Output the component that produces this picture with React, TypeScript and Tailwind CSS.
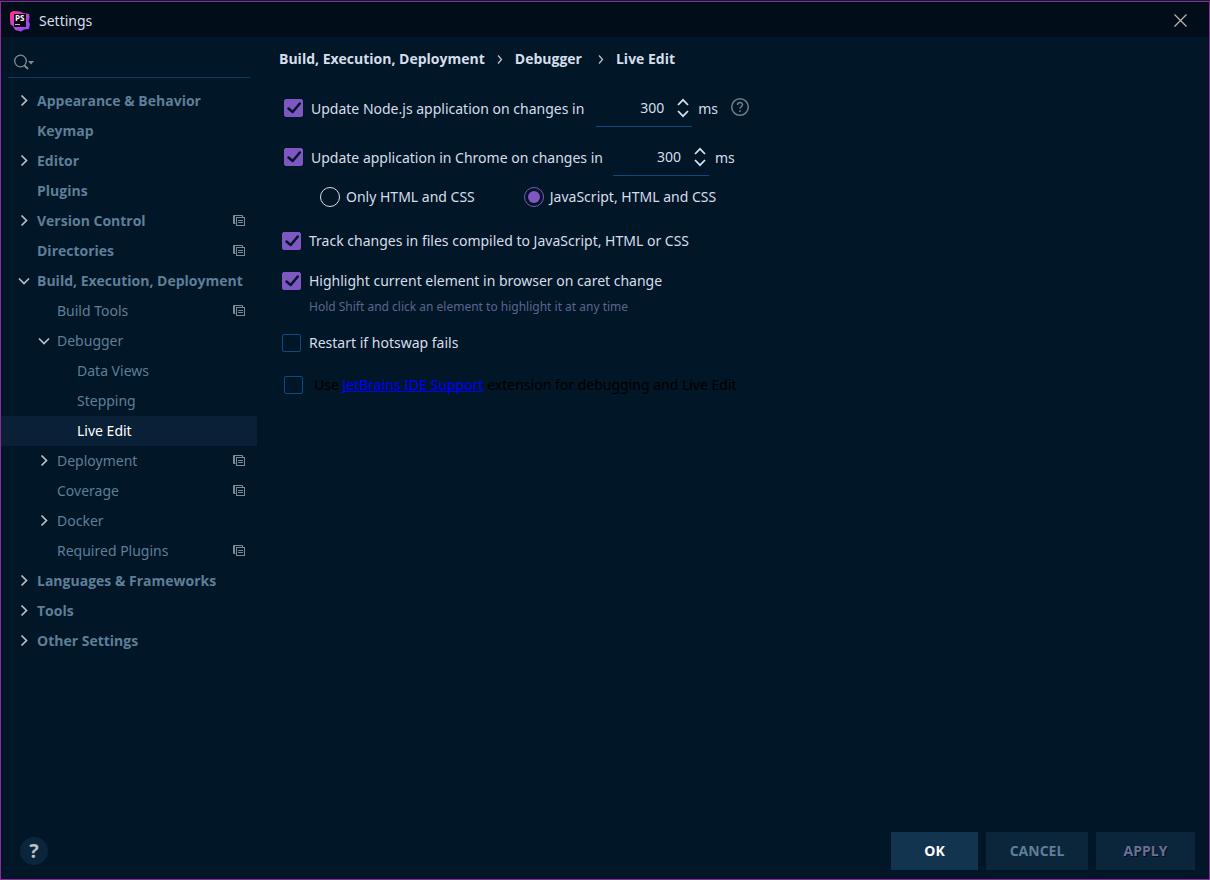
import { useState } from 'react';

type TreeItem = {
  label: string;
  level: number;
  state?: 'open' | 'closed';
  perProject?: boolean;
};

const items: TreeItem[] = [
  { label: 'Appearance & Behavior', level: 0, state: 'closed' },
  { label: 'Keymap', level: 0 },
  { label: 'Editor', level: 0, state: 'closed' },
  { label: 'Plugins', level: 0 },
  { label: 'Version Control', level: 0, state: 'closed', perProject: true },
  { label: 'Directories', level: 0, perProject: true },
  { label: 'Build, Execution, Deployment', level: 0, state: 'open' },
  { label: 'Build Tools', level: 1, perProject: true },
  { label: 'Debugger', level: 1, state: 'open' },
  { label: 'Data Views', level: 2 },
  { label: 'Stepping', level: 2 },
  { label: 'Live Edit', level: 2 },
  { label: 'Deployment', level: 1, state: 'closed', perProject: true },
  { label: 'Coverage', level: 1, perProject: true },
  { label: 'Docker', level: 1, state: 'closed' },
  { label: 'Required Plugins', level: 1, perProject: true },
  { label: 'Languages & Frameworks', level: 0, state: 'closed' },
  { label: 'Tools', level: 0, state: 'closed' },
  { label: 'Other Settings', level: 0, state: 'closed' },
];

const indents = ['pl-[15px]', 'pl-[35px]', 'pl-[55px]'];

const Logo = () => (
  <svg width="22" height="22" viewBox="0 0 22 22" aria-hidden="true">
    <defs>
      <linearGradient id="logo" x1="0" y1="0" x2="1" y2="1">
        <stop offset="0.1" stopColor="#ff318c" />
        <stop offset="0.45" stopColor="#c543d8" />
        <stop offset="1" stopColor="#7b4dff" />
      </linearGradient>
    </defs>
    <path d="M1 3 4 1l7 .5 3 1.500 6 1 .5 3-1 4 1.500 3-1 5-5 .5-3 2-6-1.500-2-4-2.500-1.500-.5-5Z" fill="url(#logo)" />
    <rect x="5" y="4" width="12" height="13" fill="#0b0610" />
    <rect x="6" y="14" width="5" height="1" fill="#b9b5bd" />
    <text x="6" y="11" fontSize="8" fontWeight="700" fill="#fff" fontFamily="Open Sans, sans-serif">PS</text>
  </svg>
);

const Arrow = ({ open }: { open: boolean }) => (
  <svg width="16" height="16" viewBox="0 0 16 16" fill="none" stroke="#b9c1c7" strokeWidth="1.7" aria-hidden="true">
    <path d={open ? 'M3 5.5 8 10.5 13 5.5' : 'M5.5 2.5 10.5 7.5 5.5 12.5'} />
  </svg>
);

const ProjectIcon = () => (
  <svg width="12" height="12" viewBox="0 0 12 12" fill="none" stroke="#7c8b96" aria-hidden="true">
    <path d="M9.500 2V.5H.5V8.500h2M1.500 1v7" />
    <rect x="3.500" y="2.500" width="8" height="8" />
    <path d="M5 5.500h5M5 7.500h5" />
  </svg>
);

const Checkbox = ({ id, checked }: { id: string; checked?: boolean }) => (
  <span className="relative flex h-[18px] w-[19px] shrink-0">
    <input
      id={id}
      type="checkbox"
      defaultChecked={checked}
      className="peer h-full w-full appearance-none rounded-xs border border-[#0b4a80] checked:border-[#7e57c2] checked:bg-[#7e57c2]"
    />
    <svg
      className="pointer-events-none absolute inset-0 hidden peer-checked:block"
      width="19"
      height="18"
      viewBox="0 0 19 18"
      fill="none"
      stroke="#011627"
      strokeWidth="2.5"
      strokeLinecap="round"
      strokeLinejoin="round"
      aria-hidden="true"
    >
      <path d="M4.500 9.500 8.700 13 15.800 4.500" />
    </svg>
  </span>
);

const Spinner = ({ label }: { label: string }) => {
  const [value, setValue] = useState(300);

  return (
    <div className="flex h-[37px] w-24 items-center border-b border-[#0b4a80]">
      <input
        type="text"
        aria-label={label}
        value={value}
        onChange={(e) => setValue(Number(e.target.value) || 0)}
        className="w-[68px] bg-transparent text-right outline-none"
      />
      <div className="ml-auto mr-[3px] flex flex-col gap-1">
        <button type="button" aria-label="Increase" onClick={() => setValue(value + 50)}>
          <svg width="12" height="8" viewBox="0 0 12 8" fill="none" stroke="#d6deeb" strokeWidth="1.8">
            <path d="M1 7 6 1.800 11 7" />
          </svg>
        </button>
        <button type="button" aria-label="Decrease" onClick={() => setValue(value - 50)}>
          <svg width="12" height="8" viewBox="0 0 12 8" fill="none" stroke="#d6deeb" strokeWidth="1.8">
            <path d="M1 1 6 6.200 11 1" />
          </svg>
        </button>
      </div>
    </div>
  );
};

const Radio = ({ id, checked }: { id: string; checked?: boolean }) => (
  <span className="relative flex h-5 w-5 shrink-0 items-center justify-center">
    <input
      id={id}
      type="radio"
      name="chrome-mode"
      defaultChecked={checked}
      className="peer h-5 w-5 appearance-none rounded-full border border-[#d6deeb] checked:border-[#7e57c2]"
    />
    <span className="pointer-events-none absolute hidden h-3 w-3 rounded-full bg-[#7e57c2] peer-checked:block" />
  </span>
);

const Sidebar = () => {
  const [selected, setSelected] = useState('Live Edit');

  return (
    <aside className="w-64 shrink-0">
      <label className="mx-[7px] flex h-[41px] items-center border-b border-[#0b3b66] pl-[5px] pt-2.5">
        <svg width="22" height="17" viewBox="0 0 22 17" fill="none" stroke="#7d8b95" strokeWidth="1.3" aria-hidden="true">
          <circle cx="7.500" cy="7" r="5.800" />
          <path d="M11.500 11.500 15 15" strokeWidth="2" />
          <path d="M15 7h6l-3 3.500Z" fill="#7d8b95" stroke="none" />
        </svg>
        <input aria-label="Search settings" className="min-w-0 flex-1 bg-transparent outline-none" />
      </label>
      <nav className="mt-2">
        {items.map((item) => (
          <button
            key={item.label}
            type="button"
            onClick={() => setSelected(item.label)}
            className={`flex h-[30px] w-full items-center pr-3 text-left ${indents[item.level]} ${
              item.level === 0 ? "font-['Open_Sans',sans-serif] font-bold" : ''
            } ${selected === item.label ? 'bg-[#0a2036] text-white' : 'text-[#5f7e97]'}`}
          >
            <span className="mr-[5px] w-4 shrink-0">{item.state && <Arrow open={item.state === 'open'} />}</span>
            <span className="whitespace-nowrap">{item.label}</span>
            {item.perProject && (
              <span className="ml-auto">
                <ProjectIcon />
              </span>
            )}
          </button>
        ))}
      </nav>
    </aside>
  );
};

const Crumb = () => (
  <svg width="6" height="9" viewBox="0 0 6 9" fill="none" stroke="#b9c1c7" strokeWidth="1.3" aria-hidden="true">
    <path d="M1 .5 4.500 4.500 1 8.500" />
  </svg>
);

const App = () => {
  return (
    <div className="min-h-screen bg-[#0b1f2e] pt-px font-['Noto_Sans',sans-serif] text-sm leading-5 text-[#d6deeb]">
      <div className="flex min-h-[calc(100vh-1px)] flex-col border border-[#8e2a9b] bg-[#011627]">
        <header className="flex h-[35px] items-center bg-[#010e1a] pl-2 pr-[22px] pt-0.5">
          <Logo />
          <h1 className="ml-2">Settings</h1>
          <button type="button" aria-label="Close" className="ml-auto">
            <svg width="13" height="13" viewBox="0 0 13 13" stroke="#b4b4ac" strokeWidth="1.3">
              <path d="M.5.5l12 12M12.500.5l-12 12" />
            </svg>
          </button>
        </header>

        <div className="flex flex-1">
          <Sidebar />
          <main className="min-w-0 flex-1 pl-[22px] pt-3">
            <div className="flex items-center font-['Open_Sans',sans-serif] font-bold">
              <span>Build, Execution, Deployment</span>
              <span className="mx-3"><Crumb /></span>
              <span>Debugger</span>
              <span className="ml-4 mr-3"><Crumb /></span>
              <span>Live Edit</span>
            </div>

            <div className="mt-[21px] flex items-center pl-[5px]">
              <span className="pb-0.5"><Checkbox id="node" checked /></span>
              <label htmlFor="node" className="ml-2 mr-3">Update Node.js application on changes in</label>
              <Spinner label="Node.js delay" />
              <span className="ml-1.5">ms</span>
              <button type="button" aria-label="Help on Node.js updates" className="ml-3 pb-[3px]">
                <svg width="20" height="20" viewBox="0 0 20 20" fill="none" stroke="#6f7d87" strokeWidth="1.5">
                  <circle cx="10" cy="10" r="8.300" />
                  <path d="M7.500 8c0-3.300 5-3.200 5-.2 0 1.700-2.500 1.900-2.500 4M10 13.300v1.700" />
                </svg>
              </button>
            </div>

            <div className="mt-3 flex items-center pl-[5px]">
              <span className="pb-0.5"><Checkbox id="chrome" checked /></span>
              <label htmlFor="chrome" className="ml-2 mr-2.5">Update application in Chrome on changes in</label>
              <Spinner label="Chrome delay" />
              <span className="ml-1.5">ms</span>
            </div>

            <div className="mt-[11px] flex items-center pl-[41px]">
              <Radio id="css" />
              <label htmlFor="css" className="ml-1.5">Only HTML and CSS</label>
              <span className="w-[49px]" />
              <Radio id="all" checked />
              <label htmlFor="all" className="ml-1.5">JavaScript, HTML and CSS</label>
            </div>

            <div className="mt-6 flex items-center pl-[3px]">
              <Checkbox id="track" checked />
              <label htmlFor="track" className="ml-2">Track changes in files compiled to JavaScript, HTML or CSS</label>
            </div>
            <div className="mt-5 flex items-center pl-[3px]">
              <Checkbox id="highlight" checked />
              <label htmlFor="highlight" className="ml-2">Highlight current element in browser on caret change</label>
            </div>
            <p className="mt-1.5 pl-[30px] text-xs leading-5 text-[#5c6590]">
              Hold Shift and click an element to highlight it at any time
            </p>
            <div className="mt-4 flex items-center pl-[3px]">
              <Checkbox id="restart" />
              <label htmlFor="restart" className="ml-2">Restart if hotswap fails</label>
            </div>
            <div className="mt-[22px] flex items-center pl-[5px] text-black">
              <Checkbox id="extension" />
              <label htmlFor="extension" className="ml-[11px]">
                Use <a href="#" className="text-[#0000ff] underline [text-decoration-skip-ink:none]">JetBrains IDE Support</a> extension for debugging and Live Edit
              </label>
            </div>
          </main>
        </div>

        <footer className="flex items-center gap-2 pb-[9px] pl-[19px] pr-3.5 font-['Open_Sans',sans-serif] font-bold">
          <button type="button" aria-label="Help" className="mr-auto flex h-7 w-7 items-center justify-center rounded-full bg-[#0b253a] text-xl text-[#b9bec2]">
            ?
          </button>
          <button type="button" className="h-[38px] w-[87px] bg-[#13344f] text-white">OK</button>
          <button type="button" className="h-[38px] w-[102px] bg-[#0b253a] text-[#5f7e97]">CANCEL</button>
          <button type="button" className="h-[38px] w-[99px] bg-[#0b253a] text-[#697098] [text-shadow:1px_1px_0_#010e1a]">APPLY</button>
        </footer>
      </div>
    </div>
  );
};

export default App;
